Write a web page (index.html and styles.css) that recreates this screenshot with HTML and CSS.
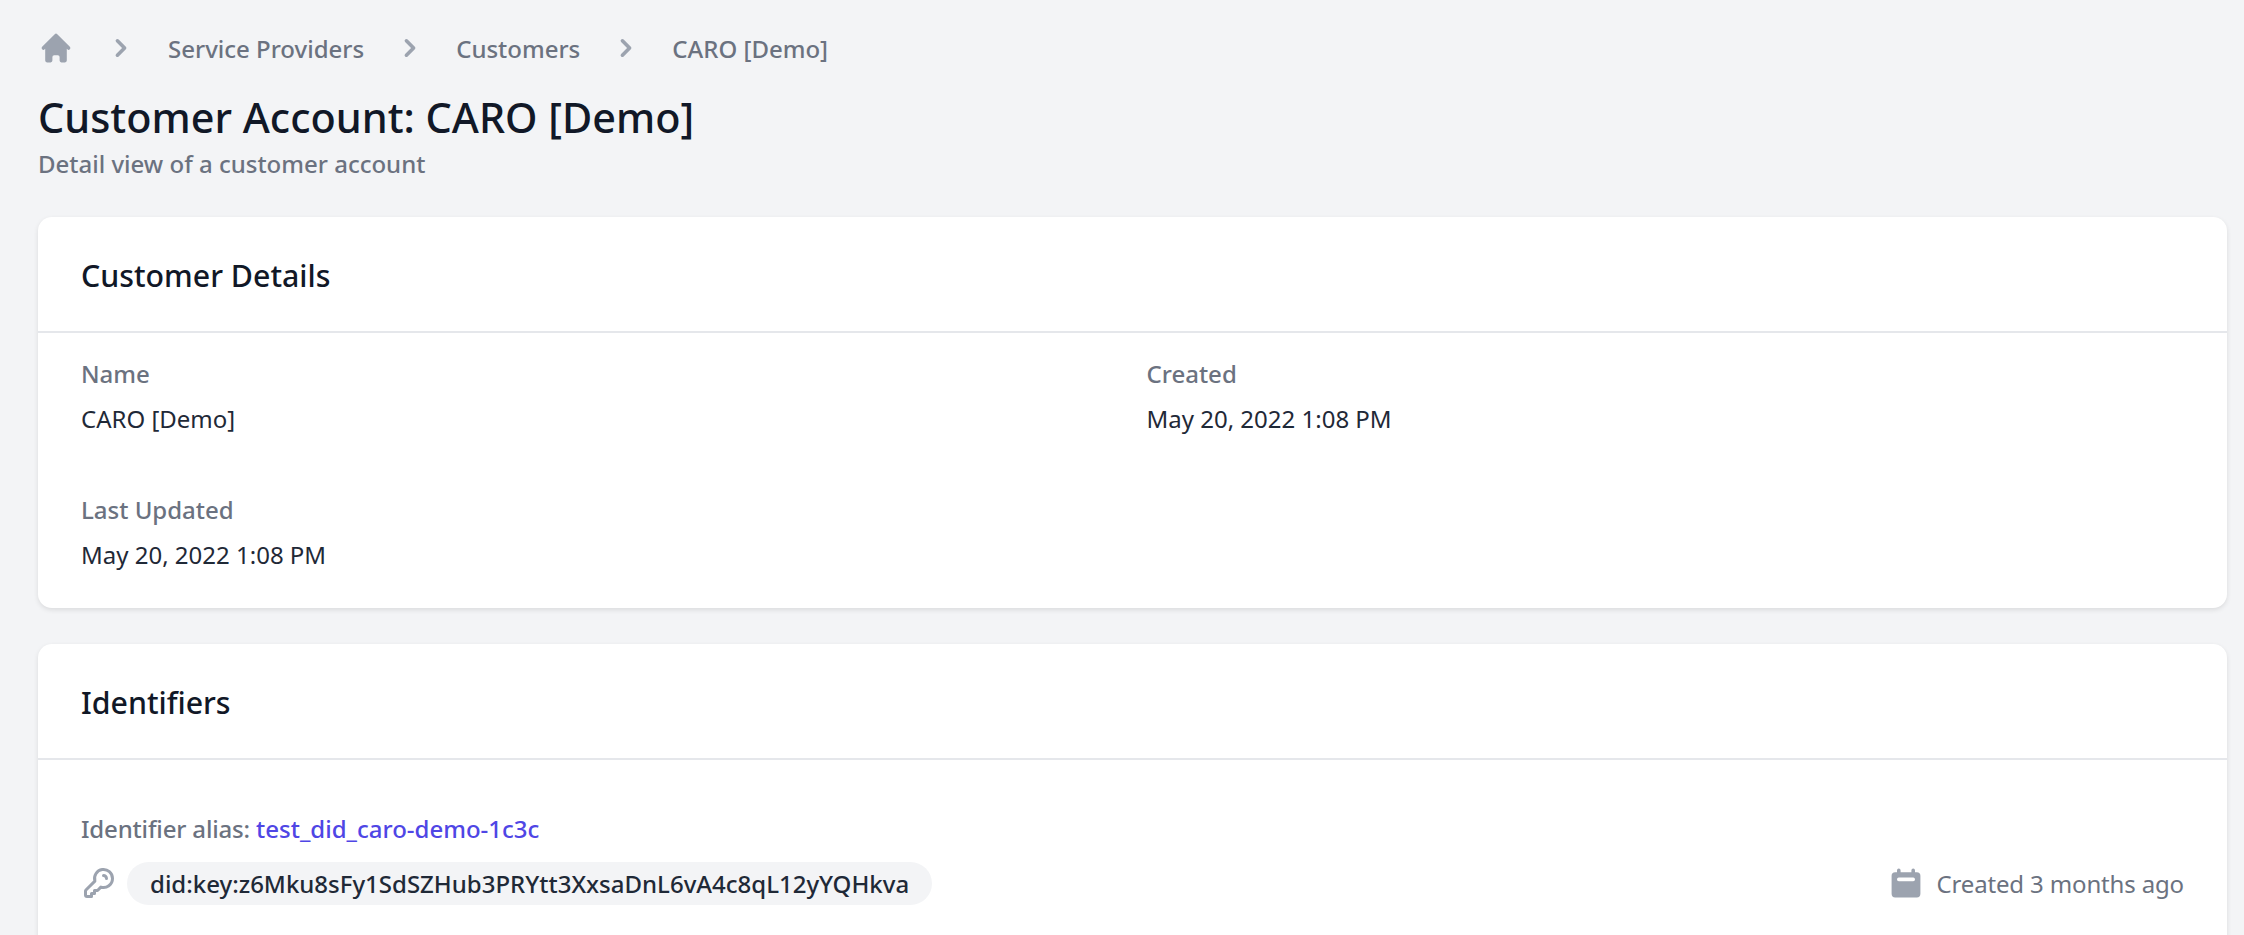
FILE: index.html
```html
<!DOCTYPE html>
<html lang="en">
<head>
    <meta charset="UTF-8">
    <title>Customer Account: CARO [Demo]</title>
    <link rel="stylesheet" href="styles.css">
</head>
<body>
    <nav class="breadcrumbs">
        <svg class="icon home" viewBox="0 0 20 20" fill="currentColor"><path d="M10.707 2.293a1 1 0 00-1.414 0l-7 7a1 1 0 001.414 1.414L4 10.414V17a1 1 0 001 1h2a1 1 0 001-1v-2a1 1 0 011-1h2a1 1 0 011 1v2a1 1 0 001 1h2a1 1 0 001-1v-6.586l.293.293a1 1 0 001.414-1.414l-7-7z"/></svg>
        <svg class="icon chevron" viewBox="0 0 20 20" fill="currentColor"><path d="M7.293 14.707a1 1 0 010-1.414L10.586 10 7.293 6.707a1 1 0 011.414-1.414l4 4a1 1 0 010 1.414l-4 4a1 1 0 01-1.414 0z"/></svg>
        <a class="crumb">Service Providers</a>
        <svg class="icon chevron" viewBox="0 0 20 20" fill="currentColor"><path d="M7.293 14.707a1 1 0 010-1.414L10.586 10 7.293 6.707a1 1 0 011.414-1.414l4 4a1 1 0 010 1.414l-4 4a1 1 0 01-1.414 0z"/></svg>
        <a class="crumb">Customers</a>
        <svg class="icon chevron" viewBox="0 0 20 20" fill="currentColor"><path d="M7.293 14.707a1 1 0 010-1.414L10.586 10 7.293 6.707a1 1 0 011.414-1.414l4 4a1 1 0 010 1.414l-4 4a1 1 0 01-1.414 0z"/></svg>
        <a class="crumb">CARO [Demo]</a>
    </nav>

    <h1 class="page-title">Customer Account: CARO [Demo]</h1>
    <p class="page-subtitle">Detail view of a customer account</p>

    <section class="card details-card">
        <h2 class="card-title">Customer Details</h2>
        <dl class="details">
            <div class="field">
                <dt>Name</dt>
                <dd>CARO [Demo]</dd>
            </div>
            <div class="field">
                <dt>Created</dt>
                <dd>May 20, 2022 1:08 PM</dd>
            </div>
            <div class="field">
                <dt>Last Updated</dt>
                <dd>May 20, 2022 1:08 PM</dd>
            </div>
        </dl>
    </section>

    <section class="card">
        <h2 class="card-title">Identifiers</h2>
        <div class="identifier">
            <p class="alias">Identifier alias: <a class="alias-link">test_did_caro-demo-1c3c</a></p>
            <div class="identifier-row">
                <svg class="icon key" viewBox="0 0 24 24" fill="none" stroke="currentColor" stroke-width="2" stroke-linecap="round" stroke-linejoin="round"><path d="M15 7a2 2 0 012 2m4 0a6 6 0 01-7.743 5.743L11 17H9v2H7v2H4a1 1 0 01-1-1v-2.586a1 1 0 01.293-.707l5.964-5.964A6 6 0 1121 9z"/></svg>
                <span class="did">did:key:z6Mku8sFy1SdSZHub3PRYtt3XxsaDnL6vA4c8qL12yYQHkva</span>
                <span class="created">
                    <svg class="icon" viewBox="0 0 20 20" fill="currentColor"><path fill-rule="evenodd" clip-rule="evenodd" d="M6 2a1 1 0 00-1 1v1H4a2 2 0 00-2 2v10a2 2 0 002 2h12a2 2 0 002-2V6a2 2 0 00-2-2h-1V3a1 1 0 10-2 0v1H7V3a1 1 0 00-1-1zm0 5a1 1 0 000 2h8a1 1 0 100-2H6z"/></svg>
                    Created 3 months ago
                </span>
            </div>
        </div>
    </section>
</body>
</html>
```

FILE: styles.css
```css
html {
    height: 100%;
    overflow: hidden;
}
body {
    margin: 0;
    padding: 30px 17px 0 38px;
    background-color: #f3f4f6;
    font-family: "Noto Sans", "Open Sans", Arial, sans-serif;
    font-size: 24px;
    color: #1f2937;
}
.icon {
    width: 36px;
    height: 36px;
    flex: none;
    color: #9ca3af;
}
.breadcrumbs {
    display: flex;
    align-items: center;
    height: 36px;
    margin-bottom: 25px;
}
.chevron {
    margin: 0 29px;
}
.crumb + .chevron {
    margin: 0 28px;
}
.crumb {
    color: #6b7280;
    font-weight: 500;
}
.page-title {
    margin: 0;
    font-size: 41.4px;
    line-height: 52px;
    font-weight: 500;
    color: #111827;
}
.page-subtitle {
    margin: 3px 0 35px;
    line-height: 36px;
    color: #6b7280;
    font-weight: 500;
}
.card {
    background: white;
    border-radius: 14px;
    box-shadow: 0 2px 5px rgba(0,0,0,0.1);
    margin-bottom: 36px;
}
.card-title {
    margin: 0;
    padding: 37px 43px 33px;
    height: 44px;
    line-height: 44px;
    font-size: 30.3px;
    font-weight: 500;
    color: #111827;
    border-bottom: 2px solid #e5e7eb;
}
.details {
    margin: 0;
    padding: 23px 43px 35px;
    display: grid;
    grid-template-columns: 1fr 1fr;
    column-gap: 28px;
    row-gap: 55.5px;
}
.field dt {
    color: #6b7280;
    font-weight: 500;
    line-height: 36px;
}
.field dd {
    margin: 8.5px 0 0;
    line-height: 36px;
}
.identifier {
    padding: 51px 43px;
}
.alias {
    margin: 0;
    line-height: 36px;
    color: #6b7280;
    font-weight: 500;
    letter-spacing: -0.16px;
}
.alias-link {
    color: #4f46e5;
    letter-spacing: 0;
}
.identifier-row {
    display: flex;
    align-items: center;
    margin-top: 15px;
}
.key {
    margin-right: 10px;
}
.did {
    background-color: #f3f4f6;
    border-radius: 22px;
    padding: 0 23px;
    line-height: 43px;
    font-weight: 500;
}
.created {
    margin-left: auto;
    display: flex;
    align-items: center;
    gap: 12px;
    color: #6b7280;
    letter-spacing: -0.15px;
}
```
